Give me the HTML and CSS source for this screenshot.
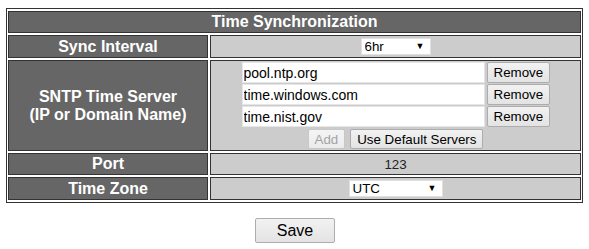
FILE: index.html
```html
<!DOCTYPE html>
<html>
<head>
<meta charset="utf-8">
<title>Time Synchronization</title>
<link rel="stylesheet" href="styles.css">
</head>
<body>
<div class="page">
  <section class="panel">
    <div class="cell head">Time Synchronization</div>

    <div class="cell label row-sync">Sync Interval</div>
    <div class="cell value row-sync">
      <span class="select-wrap w-interval">
        <select class="select"><option>6hr</option></select>
        <span class="arrow">&#9660;</span>
      </span>
    </div>

    <div class="cell label">SNTP Time Server<br>(IP or Domain Name)</div>
    <div class="cell value servers">
      <div class="server-list">
        <div class="server-row"><input class="text" type="text" value="pool.ntp.org"><button class="btn">Remove</button></div>
        <div class="server-row"><input class="text" type="text" value="time.windows.com"><button class="btn">Remove</button></div>
        <div class="server-row"><input class="text" type="text" value="time.nist.gov"><button class="btn">Remove</button></div>
        <div class="actions"><button class="btn small" disabled>Add</button><button class="btn small">Use Default Servers</button></div>
      </div>
    </div>

    <div class="cell label row-port">Port</div>
    <div class="cell value row-port plain">123</div>

    <div class="cell label row-tz">Time Zone</div>
    <div class="cell value row-tz">
      <span class="select-wrap w-zone">
        <select class="select"><option>UTC</option></select>
        <span class="arrow">&#9660;</span>
      </span>
    </div>
  </section>

  <div class="save-row"><button class="btn save">Save</button></div>
</div>
</body>
</html>
```

FILE: styles.css
```css
* { box-sizing: border-box; }

html, body {
  margin: 0;
  padding: 0;
  background: #ffffff;
}

body {
  font-family: "Liberation Sans", Arial, sans-serif;
  color: #000;
}

.page {
  padding-top: 8px;
}

.panel {
  width: 577px;
  margin: 0 auto;
  border: 1px solid #333333;
  padding: 2px 1px;
  display: grid;
  grid-template-columns: 200px 371px;
  gap: 2px;
}

.cell {
  border: 1px solid #333333;
  display: flex;
  align-items: center;
  justify-content: center;
  text-align: center;
}

.head {
  grid-column: 1 / -1;
  height: 22px;
  background: #666666;
  color: #ffffff;
  font-weight: bold;
  font-size: 16px;
}

.label {
  background: #666666;
  color: #ffffff;
  font-weight: bold;
  font-size: 16px;
  line-height: 18px;
}

.value {
  background: #cccccc;
  font-size: 13.33px;
}

.row-sync, .row-tz { height: 23px; }
.row-port { height: 22px; }

.plain { color: #222; }

.servers {
  padding: 1px 0 1px;
}

.server-list {
  display: flex;
  flex-direction: column;
  align-items: center;
  gap: 1px;
}

.server-row {
  display: flex;
  gap: 2px;
}

.text {
  width: 243px;
  height: 21px;
  margin: 0;
  border: 1px solid #e6e6e6;
  background: #ffffff;
  padding: 0 1px;
  font-family: "Liberation Sans", Arial, sans-serif;
  font-size: 14px;
  color: #000;
}

.btn {
  margin: 0;
  font-family: "Liberation Sans", Arial, sans-serif;
  font-size: 13.33px;
  color: #000;
  border: 1px solid #adadad;
  border-radius: 2px;
  background: linear-gradient(#f2f2f2, #e3e3e3);
  padding: 0 6px;
  height: 21px;
  width: 63px;
}

.actions {
  display: flex;
  gap: 5px;
  margin-top: 1px;
}

.btn.small {
  width: auto;
  height: 20px;
}

.btn:disabled {
  color: #a3a3a3;
  border-color: #c8c8c8;
  background: linear-gradient(#f4f4f4, #ececec);
}

.select-wrap {
  position: relative;
  display: inline-block;
  height: 17px;
}

.w-interval { width: 70px; }
.w-zone { width: 94px; }

.select {
  appearance: none;
  -webkit-appearance: none;
  width: 100%;
  height: 17px;
  margin: 0;
  border: 1px solid #e0e0e0;
  border-radius: 0;
  background: #ffffff;
  padding: 0 0 0 3px;
  font-family: "Liberation Sans", Arial, sans-serif;
  font-size: 13.33px;
  color: #000;
}

.arrow {
  position: absolute;
  right: 6px;
  top: 4px;
  font-size: 9px;
  line-height: 9px;
  color: #000;
  pointer-events: none;
}

.save-row {
  display: flex;
  justify-content: center;
  padding-top: 15px;
}

.btn.save {
  width: 80px;
  height: 25px;
  font-size: 16px;
  margin-left: 1px;
}
```
